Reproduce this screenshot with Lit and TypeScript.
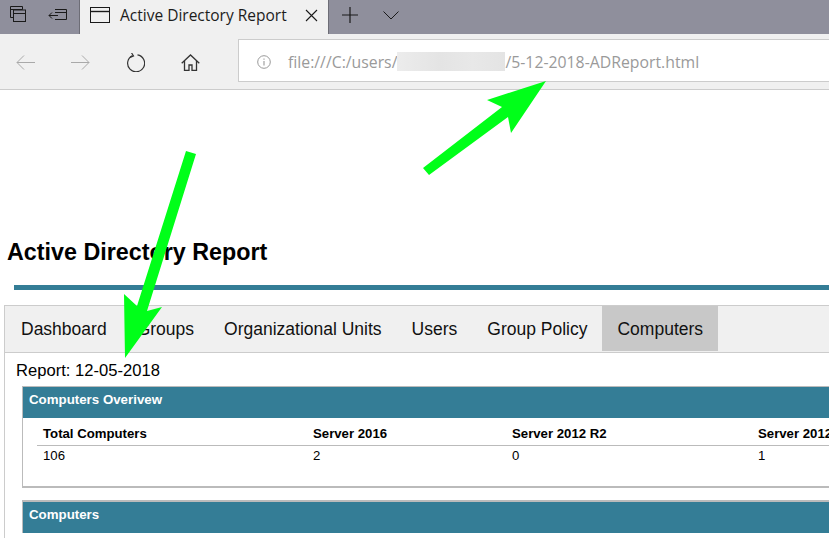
import { LitElement, html, css, svg } from "lit";
import { customElement } from "lit/decorators.js";

const ico = (w: number, h: number, body: unknown, cls = "") =>
  html`<svg class="ico ${cls}" width=${w} height=${h} viewBox="0 0 ${w} ${h}">${body}</svg>`;

@customElement("app-root")
export class AppRoot extends LitElement {
  static styles = css`
    :host { display: block; position: relative; width: 829px; height: 538px; overflow: hidden; background: #fff; font-family: "Liberation Sans", Arial, sans-serif; color: #000; }
    .ico { display: block; flex: none; fill: none; stroke: currentColor; stroke-width: 1; }
    .tabbar { height: 34px; background: #8f8f9c; display: flex; color: #1a1a1a; }
    .tb-left { width: 79px; display: flex; align-items: flex-start; padding: 5px 0 0 9px; box-sizing: border-box; gap: 21px; }
    .tab { width: 250px; background: #f0f0f0; display: flex; align-items: center; box-sizing: border-box; padding: 0 0 4px 10px; border-left: 1px solid #6d6d76; border-right: 1px solid #6d6d76; }
    .tab-title { font: 15.5px "Open Sans", "Noto Sans", sans-serif; margin-left: 10px; width: 185px; color: #1c1c1c; white-space: nowrap; }
    .tb-right { display: flex; align-items: center; padding: 0 0 4px 13px; gap: 25px; }
    .toolbar { height: 56px; box-sizing: border-box; background: #f0f0f0; border-bottom: 1px solid #ccc; display: flex; align-items: center; padding: 2px 0 0 16px; }
    .nav { display: flex; align-items: center; color: #333; }
    .nav .b { margin-right: 36px; color: #a9a9a9; }
    .nav .r { margin-right: 36px; }
    .addr { margin-left: 38px; flex: 1; margin-right: -4px; height: 43px; box-sizing: border-box; background: #fff; border: 1px solid #ccc; border-right: 0; display: flex; align-items: center; padding: 2px 0 0 18px; margin-top: -4px; color: #999; }
    .url { font: 15.8px "Open Sans", "Noto Sans", sans-serif; color: #9a9a9a; display: flex; align-items: center; margin-left: 17px; white-space: nowrap; }
    .blur { width: 108px; height: 19px; background: linear-gradient(90deg, #ececec, #e4e4e4 40%, #e8e8e8 70%, #e4e4e4); }
    .page { padding: 0 0 0 4px; }
    h1 { margin: 0; padding: 148px 0 0 3px; font-size: 23.3px; line-height: 28px; font-weight: bold; white-space: nowrap; }
    .rule { height: 5px; background: #347d96; margin: 19px 0 15px 10px; }
    .tabs { display: flex; height: 48px; box-sizing: border-box; border: 1px solid #ccc; border-right: 0; background: #f0f0f0; padding: 0 0 0 1px; margin-right: -4px; }
    .tabs span { display: flex; align-items: center; height: 45px; padding: 1px 15px 0; font-size: 17.5px; color: #111; white-space: nowrap; box-sizing: border-box; }
    .tabs span.on { background: #c8c8c8; }
    .content { border-left: 1px solid #ccc; padding: 8px 0 0 11px; height: 185px; }
    .report { font-size: 16.6px; line-height: 19px; margin-bottom: 6px; }
    .panel { margin: 0 0 12px 6px; width: 1000px; border: 1px solid #bbb; border-width: 1px 0 2px 1px; box-sizing: border-box; }
    .head { height: 31px; background: #347d96; color: #fff; font-size: 13.3px; font-weight: bold; line-height: 26px; padding-left: 6px; }
    .grid { margin: 8px 0 0 14px; }
    .row { display: grid; grid-template-columns: 270px 199px 246px 200px; padding-left: 6px; font-size: 13.2px; line-height: 15px; }
    .row.h { font-weight: bold; padding-bottom: 4px; border-bottom: 1px solid #bbb; }
    .row.d { padding-top: 2px; height: 38px; }
    .last { border-top-width: 2px; border-bottom: 0; }
    .arrows { position: absolute; left: 0; top: 0; pointer-events: none; }
  `;

  render() {
    const tabs = ["Dashboard", "Groups", "Organizational Units", "Users", "Group Policy", "Computers"];
    return html`
      <div class="tabbar">
        <div class="tb-left">
          ${ico(18, 18, svg`<path d="M1.5 1.5h12v3M1.5 1.5v11h3"/><rect x="4.5" y="5" width="12" height="11.5"/><path d="M4.5 8.5h12M1.5 4.5h12"/>`)}
          ${ico(21, 18, svg`<path d="M7 4.5h11.5v10H7M7 7.5h11.5"/><path d="M1 10.500h9M4 7.500l-3 3 3 3"/>`)}
        </div>
        <div class="tab">
          ${ico(20, 16, svg`<rect x=".5" y=".5" width="19" height="15"/><path d="M.5 4.500h19" stroke-width="1.400"/>`)}
          <span class="tab-title">Active Directory Report</span>
          ${ico(13, 13, svg`<path d="M1 1l11 11M12 1L1 12" stroke-width="1.100"/>`)}
        </div>
        <div class="tb-right">
          ${ico(16, 16, svg`<path d="M8 0v16M0 8h16" stroke-width="1.200"/>`)}
          ${ico(16, 9, svg`<path d="M.5 .5L8 8l7.500-7.500"/>`)}
        </div>
      </div>
      <div class="toolbar">
        <div class="nav">
          ${ico(19, 15, svg`<path d="M19 7.500H1M8 .5l-7 7 7 7"/>`, "b")}
          ${ico(19, 15, svg`<path d="M0 7.500h18M11 .5l7 7-7 7"/>`, "b")}
          ${ico(19, 19, svg`<path d="M6.500 2.600A8.500 8.500 0 1 0 11.500 1.900" stroke-width="1.200"/><path d="M5.500 -.2l2 3.200-3.400 1.400" stroke-width="1.200"/>`, "r")}
          ${ico(19, 17, svg`<path d="M.7 9.200L9.500 1l8.800 8.200M3.500 7v9.500h4.500v-5.500h3v5.500h4.500V7" stroke-width="1.300"/>`)}
        </div>
        <div class="addr">
          ${ico(14, 14, svg`<circle cx="7" cy="7" r="6.300"/><path d="M7 6v4.500M7 3.500v1.300" stroke-width="1.100"/>`)}
          <div class="url">file:///C:/users/<span class="blur"></span>/5-12-2018-ADReport.html</div>
        </div>
      </div>
      <div class="page">
        <h1>Active Directory Report</h1>
        <div class="rule"></div>
        <div class="tabs">${tabs.map((t) => html`<span class=${t === "Computers" ? "on" : ""}>${t}</span>`)}</div>
        <div class="content">
          <div class="report">Report: 12-05-2018</div>
          <div class="panel">
            <div class="head">Computers Overivew</div>
            <div class="grid">
              <div class="row h"><span>Total Computers</span><span>Server 2016</span><span>Server 2012 R2</span><span>Server 2012</span></div>
              <div class="row d"><span>106</span><span>2</span><span>0</span><span>1</span></div>
            </div>
          </div>
          <div class="panel last"><div class="head">Computers</div></div>
        </div>
      </div>
      <svg class="arrows" width="829" height="538" viewBox="0 0 829 538">
        <polygon fill="#00ff19" points="423,168 429,175 508,117 511,133 546,81 487,100 502,107" />
        <polygon fill="#00ff19" points="186,151 196,154 147,311 162,307 125,358 124,294 137,306" />
      </svg>
    `;
  }
}
